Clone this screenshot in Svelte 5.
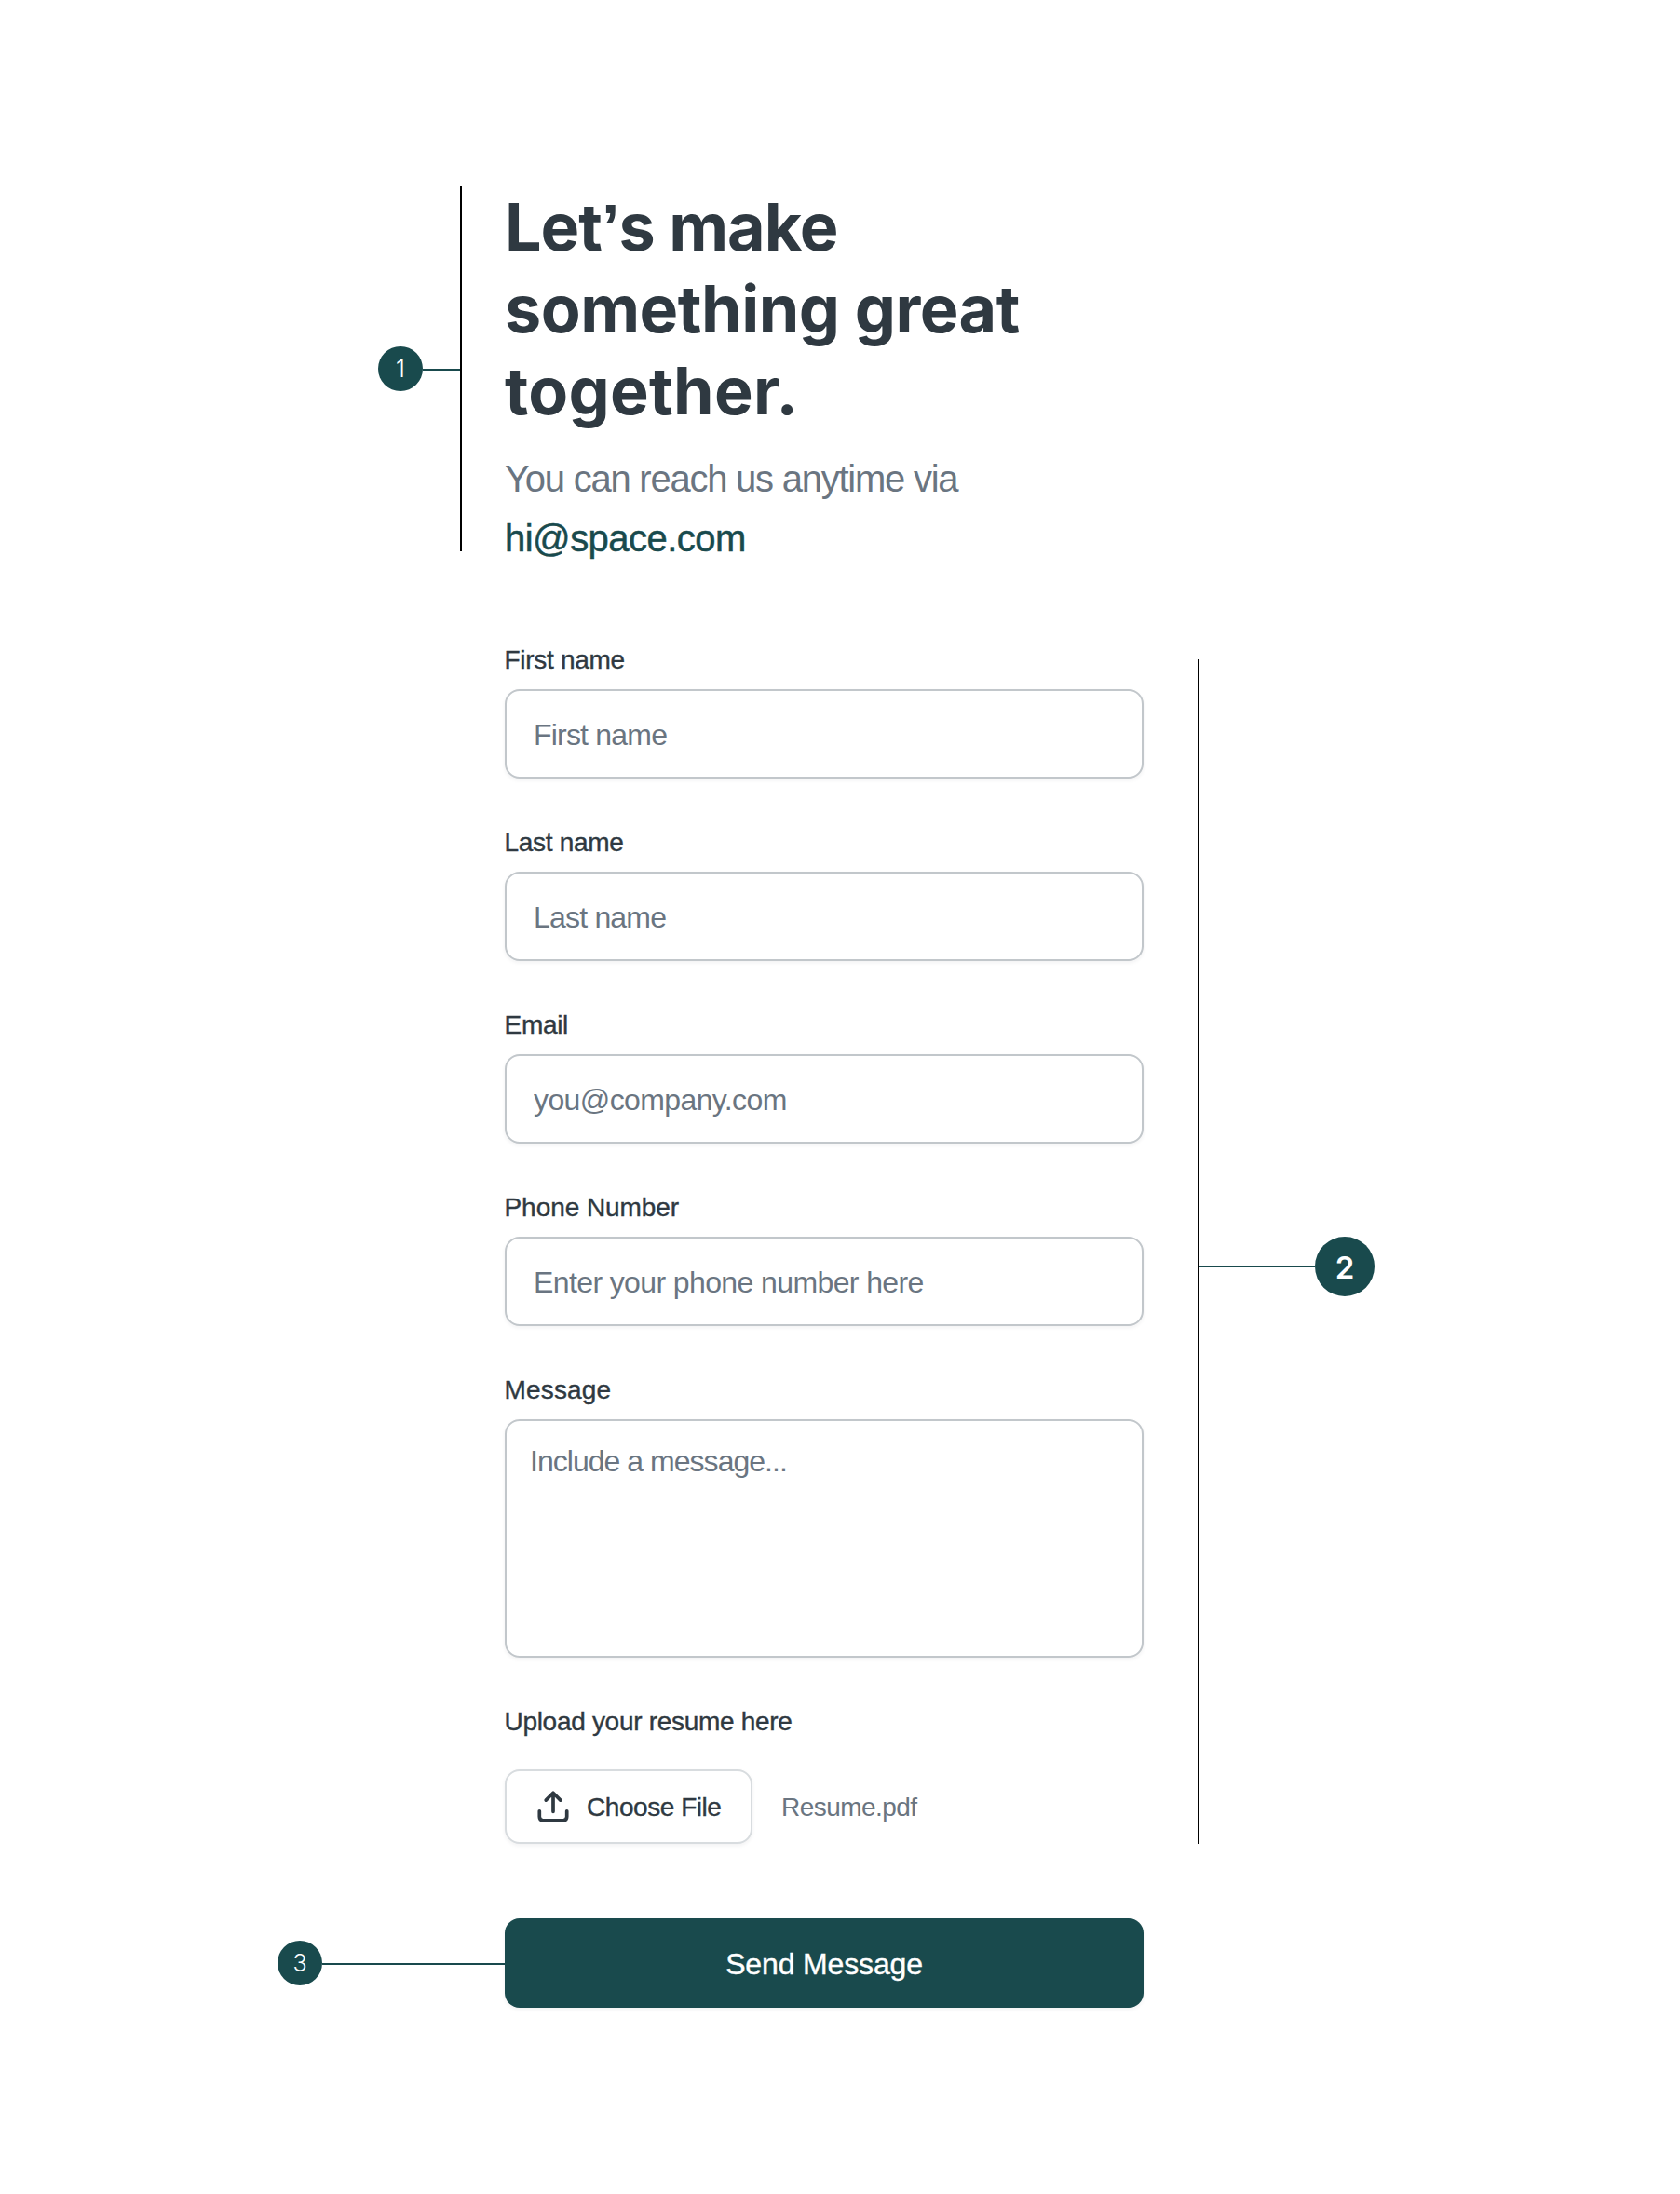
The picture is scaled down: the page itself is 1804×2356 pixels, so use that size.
<script>
  const fields = [
    { id: 'first', label: 'First name', type: 'text', hint: 'First name' },
    { id: 'last', label: 'Last name', type: 'text', hint: 'Last name' },
    { id: 'email', label: 'Email', type: 'email', hint: 'you@company.com' },
    { id: 'phone', label: 'Phone Number', type: 'tel', hint: 'Enter your phone number here' }
  ];
</script>

<main class="page">
  <section class="intro">
    <div class="callout intro-callout">
      <span class="badge">1</span>
      <span class="connector"></span>
    </div>
    <div class="rule"></div>
    <header class="intro-text">
      <h1>
        <span class="line first-line">Let<span class="apostrophe">’</span>s make</span>
        <span class="line">something great</span>
        <span class="line last-line">together.</span>
      </h1>
      <p>You can reach us anytime via</p>
      <a href="mailto:hi@space.com">hi@space.com</a>
    </header>
  </section>

  <section class="details">
    <form class="form">
      {#each fields as field (field.id)}
        <div class="field {field.id}">
          <label for={field.id}>{field.label}</label>
          <input id={field.id} type={field.type} placeholder={field.hint} />
        </div>
      {/each}
      <div class="field message">
        <label for="message">Message</label>
        <textarea id="message" placeholder="Include a message..."></textarea>
      </div>
      <div class="field upload">
        <span class="label">Upload your resume here</span>
        <div class="upload-row">
          <button class="choose" type="button">
            <svg width="36" height="36" viewBox="0 0 36 36" fill="none" stroke="currentColor" stroke-width="3.7" stroke-linecap="round" stroke-linejoin="round">
              <path d="M3.3 22.8v6c0 2.8 1.2 4 4 4h21.400c2.800 0 4-1.200 4-4v-6" />
              <path d="M18 23.300V3.300M10.200 11.100 18 3.300l7.800 7.800" />
            </svg>
            <span>Choose File</span>
          </button>
          <span class="file-name">Resume.pdf</span>
        </div>
      </div>
    </form>
    <div class="rule"></div>
    <div class="callout form-callout">
      <span class="connector"></span>
      <span class="badge large">2</span>
    </div>
  </section>

  <section class="submit">
    <div class="callout submit-callout">
      <span class="badge">3</span>
      <span class="connector"></span>
    </div>
    <button class="send" type="button">Send Message</button>
  </section>
</main>

<style>
  :global(body) {
    background: #fff;
  }

  .page {
    box-sizing: border-box;
    width: 1804px;
    height: 2356px;
    padding-top: 200px;
    overflow: hidden;
    font-family: 'Liberation Sans', Arial, sans-serif;
    color: #2f3941;
  }

  .page * {
    box-sizing: border-box;
  }

  section {
    display: flex;
  }

  .rule {
    flex: none;
    width: 2px;
    background: #000;
  }

  .callout {
    display: flex;
    align-items: center;
  }

  .connector {
    flex: 1;
    height: 2px;
    background: #194a4d;
  }

  .badge {
    display: flex;
    flex: none;
    align-items: center;
    justify-content: center;
    width: 48px;
    height: 48px;
    border-radius: 50%;
    background: #194a4d;
    color: #fff;
    font: 300 25px/48px Inter, sans-serif;
  }

  .badge.large {
    width: 64px;
    height: 64px;
    padding-top: 2px;
    font-size: 33px;
    font-weight: 600;
  }

  .intro {
    height: 392px;
    padding-left: 406px;
  }

  .intro-callout {
    width: 88px;
  }

  .intro-callout .connector,
  .submit-callout .connector {
    margin-top: 2px;
  }

  .intro-text {
    margin: 0 0 0 46px;
  }

  h1 {
    margin: 0 0 18px;
    font: 700 70px/88px Inter, sans-serif;
    letter-spacing: -0.48px;
  }

  .line {
    display: block;
    height: 88px;
    white-space: nowrap;
  }

  .first-line {
    letter-spacing: -1px;
  }

  .last-line {
    letter-spacing: 0.3px;
  }

  .apostrophe {
    font-family: 'Liberation Sans', Arial, sans-serif;
    line-height: 1;
  }

  p,
  a {
    display: block;
    margin: 0;
    font-size: 40px;
    line-height: 64px;
    white-space: nowrap;
  }

  p {
    color: #6a7581;
    letter-spacing: -1.24px;
  }

  a {
    color: #194a4d;
    text-decoration: none;
    letter-spacing: -0.53px;
    -webkit-text-stroke: 0.5px currentColor;
  }

  .details {
    height: 1292px;
    margin-top: 96px;
    padding-left: 542px;
  }

  .details .rule {
    margin: 20px 0 0 58px;
  }

  .form {
    display: flex;
    flex-direction: column;
    gap: 48px;
    width: 686px;
  }

  .field {
    display: flex;
    flex-direction: column;
    gap: 12px;
  }

  label,
  .label {
    height: 40px;
    margin-left: -0.5px;
    padding-top: 1px;
    font-size: 28px;
    line-height: 40px;
    letter-spacing: -0.3px;
    -webkit-text-stroke: 0.4px currentColor;
  }

  input,
  textarea {
    display: block;
    width: 100%;
    margin: 0;
    border: 2px solid #c2c7cb;
    border-radius: 16px;
    background: #fff;
    box-shadow: 0 2px 4px rgba(27, 36, 44, 0.06);
    color: #2f3941;
    font: 400 32px/48px 'Liberation Sans', Arial, sans-serif;
    outline: none;
    resize: none;
  }

  input {
    height: 96px;
    padding: 2px 29px 0;
    letter-spacing: -0.8px;
  }

  textarea {
    height: 256px;
    padding: 19px 25px;
    letter-spacing: -0.97px;
  }

  ::placeholder {
    color: #6a7581;
    opacity: 1;
  }

  .email input,
  .phone input {
    letter-spacing: -0.61px;
  }

  .phone label {
    letter-spacing: -0.06px;
  }

  .message label {
    letter-spacing: 0.17px;
  }

  .upload {
    gap: 32px;
  }

  .upload-row {
    display: flex;
    align-items: center;
    gap: 31px;
  }

  button {
    display: flex;
    align-items: center;
    margin: 0;
    border: none;
    border-radius: 16px;
    box-shadow: 0 2px 4px rgba(27, 36, 44, 0.06);
    font-family: inherit;
  }

  .choose {
    gap: 18px;
    width: 266px;
    height: 80px;
    padding: 0 0 0 32px;
    border: 2px solid #d8dcdf;
    background: #fff;
    color: #2f3941;
    font-size: 28px;
    letter-spacing: -0.45px;
    white-space: nowrap;
    -webkit-text-stroke: 0.4px currentColor;
  }

  .choose span,
  .file-name {
    padding-top: 1px;
  }

  .file-name {
    color: #6a7581;
    font-size: 28px;
    letter-spacing: -0.54px;
  }

  .form-callout {
    width: 188px;
    height: 64px;
    margin-top: 640px;
  }

  .submit {
    align-items: center;
    margin-top: 80px;
    padding-left: 298px;
  }

  .submit-callout {
    width: 244px;
  }

  .send {
    justify-content: center;
    width: 686px;
    height: 96px;
    padding: 2px 0 0;
    background: #194a4d;
    color: #fff;
    font-size: 32px;
    letter-spacing: -0.15px;
    -webkit-text-stroke: 0.4px currentColor;
  }
</style>
